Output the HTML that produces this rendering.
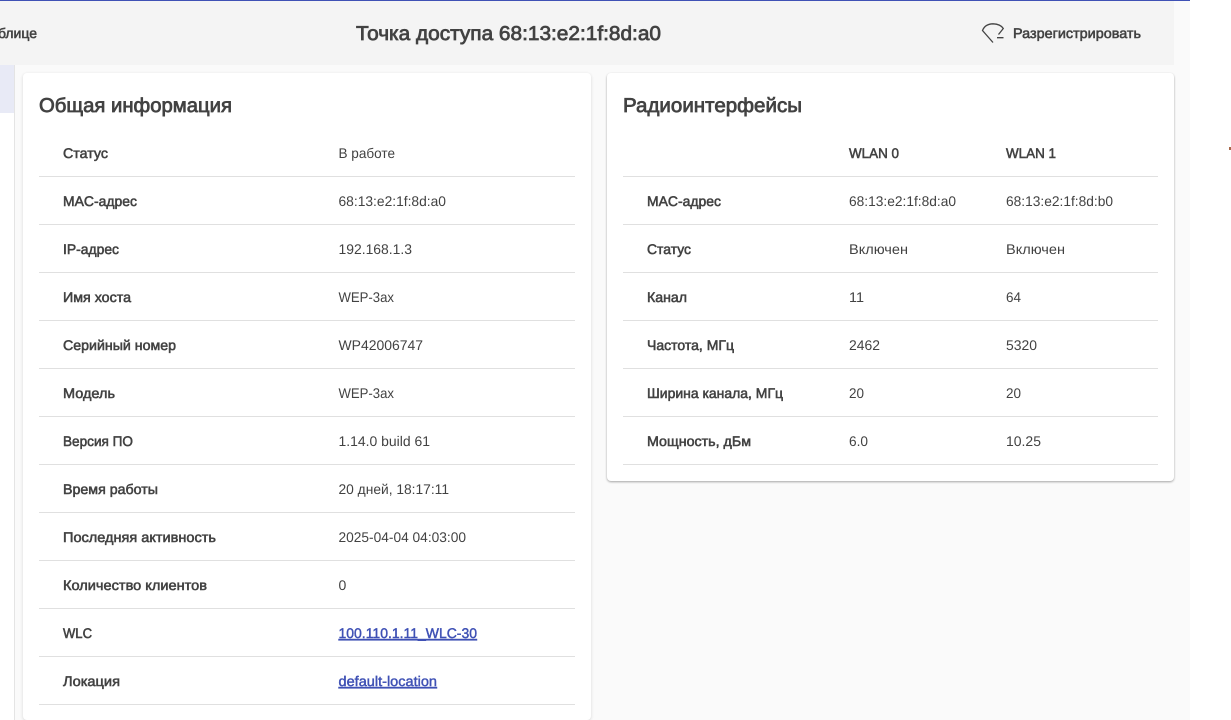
<!DOCTYPE html>
<html lang="ru"><head><meta charset="utf-8"><title>Точка доступа</title>
<style>
html,body{margin:0;padding:0;width:1231px;height:720px;overflow:hidden;background:#fff}
.a{position:absolute}
svg{position:absolute;left:0;top:0}
text{font-family:"Liberation Sans",sans-serif;font-size:14px;fill:#424242;text-rendering:geometricPrecision}
.l{font-weight:400;fill:#424242;stroke:#424242;stroke-width:.55px}
.h{font-size:20px;font-weight:400;fill:#424242;stroke:#424242;stroke-width:.75px}
.u{fill:#3f51b5;stroke:#3f51b5;stroke-width:.45px;text-decoration:underline}
</style></head><body>
<div class="a" style="left:0;top:0;width:1190px;height:720px;background:#fafafa"></div>
<div class="a" style="left:0;top:1px;width:1174px;height:64px;background:#f4f4f4"></div>
<div class="a" style="left:0;top:0;width:1190px;height:1px;background:#3f51b5"></div>
<div class="a" style="left:0;top:65px;width:14px;height:655px;background:#fff;border-right:1px solid #e4e4e4"></div>
<div class="a" style="left:0;top:65px;width:14px;height:48px;background:#e8eaf6"></div>
<div class="a" style="left:23px;top:73px;width:568px;height:647px;background:#fff;border-radius:4px;box-shadow:0 1px 3px rgba(0,0,0,.14)"></div>
<div class="a" style="left:607px;top:73px;width:567px;height:408px;background:#fff;border-radius:4px;box-shadow:0 1px 2px rgba(0,0,0,.35)"></div>
<div class="a" style="left:1229px;top:147px;width:2px;height:3px;background:#a8674a"></div>
<svg width="1231" height="720" viewBox="0 0 1231 720">
<g fill="#e0e0e0">
<rect x="39" y="176" width="536" height="1"/><rect x="39" y="224" width="536" height="1"/><rect x="39" y="272" width="536" height="1"/><rect x="39" y="320" width="536" height="1"/><rect x="39" y="368" width="536" height="1"/><rect x="39" y="416" width="536" height="1"/><rect x="39" y="464" width="536" height="1"/><rect x="39" y="512" width="536" height="1"/><rect x="39" y="560" width="536" height="1"/><rect x="39" y="608" width="536" height="1"/><rect x="39" y="656" width="536" height="1"/><rect x="39" y="704" width="536" height="1"/>
<rect x="623" y="176" width="535" height="1"/><rect x="623" y="224" width="535" height="1"/><rect x="623" y="272" width="535" height="1"/><rect x="623" y="320" width="535" height="1"/><rect x="623" y="368" width="535" height="1"/><rect x="623" y="416" width="535" height="1"/><rect x="623" y="464" width="535" height="1"/>
</g>
<text class="l" x="37" y="38" text-anchor="end" textLength="39" lengthAdjust="spacingAndGlyphs">блице</text>
<text class="h" x="356" y="40" textLength="305" lengthAdjust="spacingAndGlyphs">Точка доступа 68:13:e2:1f:8d:a0</text>
<path d="M993 42.5 L982.5 30.5 Q985 24 993 23.8 Q1000.5 24 1003.3 28.5 L998.5 34.5 M997 37.7 H1003.5" fill="none" stroke="#444" stroke-width="1.3"/>
<text class="l" x="1013" y="38" textLength="128" lengthAdjust="spacingAndGlyphs">Разрегистрировать</text>

<text class="h" x="39" y="112" textLength="193" lengthAdjust="spacingAndGlyphs">Общая информация</text>
<text class="h" x="623" y="112" textLength="179" lengthAdjust="spacingAndGlyphs">Радиоинтерфейсы</text>

<text class="l" x="63" y="158" textLength="45" lengthAdjust="spacingAndGlyphs">Статус</text>
<text class="l" x="63" y="206" textLength="74" lengthAdjust="spacingAndGlyphs">MAC-адрес</text>
<text class="l" x="63" y="254" textLength="56" lengthAdjust="spacingAndGlyphs">IP-адрес</text>
<text class="l" x="63" y="302" textLength="68" lengthAdjust="spacingAndGlyphs">Имя хоста</text>
<text class="l" x="63" y="350" textLength="113" lengthAdjust="spacingAndGlyphs">Серийный номер</text>
<text class="l" x="63" y="398" textLength="52" lengthAdjust="spacingAndGlyphs">Модель</text>
<text class="l" x="63" y="446" textLength="70" lengthAdjust="spacingAndGlyphs">Версия ПО</text>
<text class="l" x="63" y="494" textLength="95" lengthAdjust="spacingAndGlyphs">Время работы</text>
<text class="l" x="63" y="542" textLength="153" lengthAdjust="spacingAndGlyphs">Последняя активность</text>
<text class="l" x="63" y="590" textLength="144" lengthAdjust="spacingAndGlyphs">Количество клиентов</text>
<text class="l" x="63" y="638" textLength="29" lengthAdjust="spacingAndGlyphs">WLC</text>
<text class="l" x="63" y="686" textLength="57" lengthAdjust="spacingAndGlyphs">Локация</text>

<text x="338.5" y="158" textLength="56.5" lengthAdjust="spacingAndGlyphs">В работе</text>
<text x="338.5" y="206" textLength="107.5" lengthAdjust="spacingAndGlyphs">68:13:e2:1f:8d:a0</text>
<text x="338.5" y="254" textLength="73.5" lengthAdjust="spacingAndGlyphs">192.168.1.3</text>
<text x="338.5" y="302" textLength="55.5" lengthAdjust="spacingAndGlyphs">WEP-3ax</text>
<text x="338.5" y="350" textLength="84.5" lengthAdjust="spacingAndGlyphs">WP42006747</text>
<text x="338.5" y="398" textLength="55.5" lengthAdjust="spacingAndGlyphs">WEP-3ax</text>
<text x="338.5" y="446" textLength="91.5" lengthAdjust="spacingAndGlyphs">1.14.0 build 61</text>
<text x="338.5" y="494" textLength="110.5" lengthAdjust="spacingAndGlyphs">20 дней, 18:17:11</text>
<text x="338.5" y="542" textLength="127.5" lengthAdjust="spacingAndGlyphs">2025-04-04 04:03:00</text>
<text x="338.5" y="590">0</text>
<text class="u" x="338.5" y="638" textLength="138.5" lengthAdjust="spacingAndGlyphs">100.110.1.11_WLC-30</text>
<text class="u" x="338.5" y="686" textLength="98.5" lengthAdjust="spacingAndGlyphs">default-location</text>

<text class="l" x="849" y="158" textLength="50" lengthAdjust="spacingAndGlyphs">WLAN 0</text>
<text class="l" x="1006" y="158" textLength="50" lengthAdjust="spacingAndGlyphs">WLAN 1</text>
<text class="l" x="647" y="206" textLength="74" lengthAdjust="spacingAndGlyphs">MAC-адрес</text>
<text class="l" x="647" y="254" textLength="44" lengthAdjust="spacingAndGlyphs">Статус</text>
<text class="l" x="647" y="302" textLength="40" lengthAdjust="spacingAndGlyphs">Канал</text>
<text class="l" x="647" y="350" textLength="87" lengthAdjust="spacingAndGlyphs">Частота, МГц</text>
<text class="l" x="647" y="398" textLength="136" lengthAdjust="spacingAndGlyphs">Ширина канала, МГц</text>
<text class="l" x="647" y="446" textLength="104" lengthAdjust="spacingAndGlyphs">Мощность, дБм</text>

<text x="849" y="206" textLength="107" lengthAdjust="spacingAndGlyphs">68:13:e2:1f:8d:a0</text>
<text x="1006" y="206" textLength="107" lengthAdjust="spacingAndGlyphs">68:13:e2:1f:8d:b0</text>
<text x="849" y="254" textLength="59" lengthAdjust="spacingAndGlyphs">Включен</text>
<text x="1006" y="254" textLength="59" lengthAdjust="spacingAndGlyphs">Включен</text>
<text x="849" y="302" textLength="15" lengthAdjust="spacingAndGlyphs">11</text>
<text x="1006" y="302" textLength="15" lengthAdjust="spacingAndGlyphs">64</text>
<text x="849" y="350" textLength="31" lengthAdjust="spacingAndGlyphs">2462</text>
<text x="1006" y="350" textLength="31" lengthAdjust="spacingAndGlyphs">5320</text>
<text x="849" y="398" textLength="15" lengthAdjust="spacingAndGlyphs">20</text>
<text x="1006" y="398" textLength="15" lengthAdjust="spacingAndGlyphs">20</text>
<text x="849" y="446" textLength="19" lengthAdjust="spacingAndGlyphs">6.0</text>
<text x="1006" y="446" textLength="35" lengthAdjust="spacingAndGlyphs">10.25</text>
</svg>
</body></html>
